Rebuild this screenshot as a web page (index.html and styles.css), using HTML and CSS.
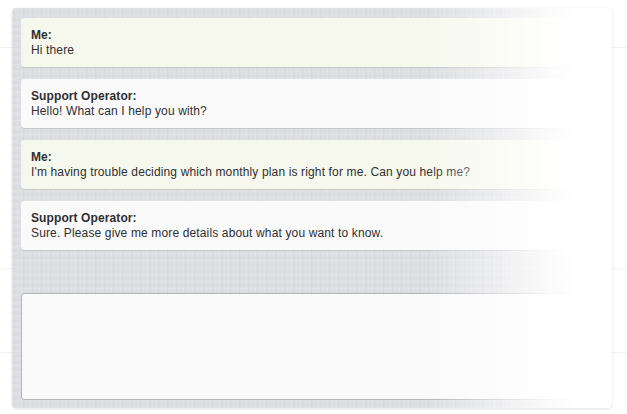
FILE: index.html
```html
<!DOCTYPE html>
<html lang="en">
<head>
<meta charset="utf-8">
<title>Support chat</title>
<link rel="stylesheet" href="styles.css">
</head>
<body>
<div class="chat">
  <div class="log">
    <div class="msg msg-me">
      <div class="who">Me:</div>
      <div class="text">Hi there</div>
    </div>
    <div class="msg msg-op">
      <div class="who">Support Operator:</div>
      <div class="text">Hello! What can I help you with?</div>
    </div>
    <div class="msg msg-me">
      <div class="who">Me:</div>
      <div class="text">I'm having trouble deciding which monthly plan is right for me. Can you help me?</div>
    </div>
    <div class="msg msg-op">
      <div class="who">Support Operator:</div>
      <div class="text">Sure. Please give me more details about what you want to know.</div>
    </div>
  </div>
  <textarea class="reply"></textarea>
</div>
</body>
</html>
```
FILE: styles.css
```css
html, body {
  margin: 0;
  padding: 0;
}

body {
  width: 627px;
  height: 414px;
  overflow: hidden;
  background-color: #fff;
  background-image:
    linear-gradient(to bottom, transparent 47px, #f1f1f1 47px, #f1f1f1 48px, transparent 48px),
    linear-gradient(to bottom, transparent 268px, #f3f3f3 268px, #f3f3f3 269px, transparent 269px),
    linear-gradient(to bottom, transparent 352px, #f3f3f3 352px, #f3f3f3 353px, transparent 353px);
  font-family: "Liberation Sans", Arial, sans-serif;
  padding: 8px 15px 6px 12px;
  box-sizing: border-box;
}

/* linen panel holding the conversation */
.chat {
  position: relative;
  width: 600px;
  height: 400px;
  box-sizing: border-box;
  padding: 10px 9px 8px 9px;
  display: flex;
  flex-direction: column;
  border-radius: 4px;
  background-color: #dddee1;
  background-image:
    repeating-linear-gradient(90deg, rgba(255,255,255,0.14) 0 1px, transparent 1px 2px, rgba(0,0,0,0.02) 2px 3px, transparent 3px 5px, rgba(255,255,255,0.08) 5px 6px, transparent 6px 9px),
    repeating-linear-gradient(0deg, rgba(255,255,255,0.12) 0 1px, transparent 1px 3px, rgba(0,0,0,0.018) 3px 4px, transparent 4px 7px);
  box-shadow: 0 1px 3px rgba(0, 0, 0, 0.12);
}

/* the right side of the panel fades out to white */
.chat::after {
  content: "";
  position: absolute;
  inset: 0;
  border-radius: 4px;
  pointer-events: none;
  background: linear-gradient(to right,
    rgba(255,255,255,0) 69%,
    rgba(255,255,255,0.55) 82%,
    rgba(255,255,255,0.9) 90%,
    #fff 94%);
}

.log {
  display: flex;
  flex-direction: column;
  gap: 11px;
}

.msg {
  padding: 10px 10px 9px 10px;
  border-radius: 4px;
  border-bottom: 1px solid #c6c7c9;
  font-size: 12px;
  letter-spacing: 0.14px;
  line-height: 15px;
  color: #2f2f33;
}

.msg-me {
  background: #f7f8ed;
}

.msg-op {
  background: #fafafa;
}

.who {
  font-weight: bold;
  letter-spacing: 0.1px;
}

.reply {
  margin-top: 42px;
  flex: 1;
  display: block;
  width: 100%;
  box-sizing: border-box;
  resize: none;
  border: 1px solid #b6b6b6;
  border-radius: 3px;
  background: #fafafa;
  font-family: "Liberation Sans", Arial, sans-serif;
  font-size: 12px;
  padding: 6px 8px;
  outline: none;
}
```
